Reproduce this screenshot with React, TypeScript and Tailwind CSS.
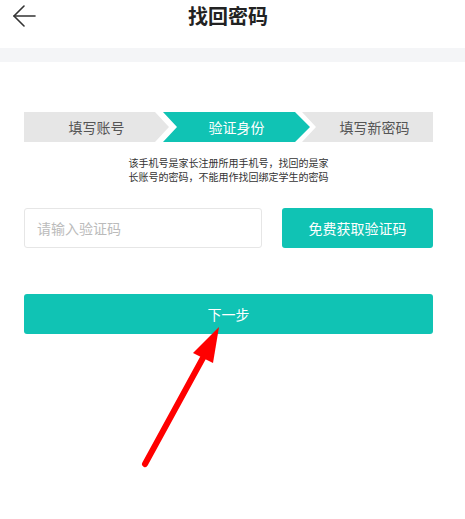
const teal = "bg-[#10c3b4]";

function BackIcon() {
  return (
    <svg width="24" height="22" viewBox="0 0 24 22" fill="none" stroke="#333" strokeWidth="1.6" strokeLinecap="round" strokeLinejoin="round">
      <path d="M2 11 H23" />
      <path d="M12 1 L2 11 L12 21" />
    </svg>
  );
}

function Steps() {
  return (
    <div className="flex h-[30px] text-[14px] leading-[30px]">
      <div className="w-[145px] shrink-0 bg-[#e6e6e6] text-[#555] text-center [clip-path:polygon(0_0,131px_0,145px_50%,131px_100%,0_100%)]">
        填写账号
      </div>
      <div className={`-ml-[6px] w-[147px] shrink-0 ${teal} text-white text-center [clip-path:polygon(0_0,132px_0,147px_50%,132px_100%,0_100%,14px_50%)]`}>
        验证身份
      </div>
      <div className="-ml-[8px] w-[131px] shrink-0 bg-[#e6e6e6] text-[#555] text-center pl-[14px] [clip-path:polygon(0_0,100%_0,100%_100%,0_100%,14px_50%)]">
        填写新密码
      </div>
    </div>
  );
}

export default function App() {
  return (
    <div className="relative w-[465px] h-[519px] bg-white overflow-hidden font-['Noto_Sans_CJK_SC','Noto_Sans',sans-serif]">
      {/* header */}
      <div className="relative h-[48px]">
        <div className="absolute left-[12px] top-[5px]">
          <BackIcon />
        </div>
        <div className="pt-[3px] pr-[9px] text-center text-[20px] leading-[26px] font-bold text-[#222]">找回密码</div>
      </div>
      <div className="h-[14px] bg-[#f4f5f7]" />

      <div className="ml-6 w-[409px] pt-[50px]">
        <Steps />

        <p className="mt-[14px] text-center text-[10px] leading-[14px] text-[#333]">
          该手机号是家长注册所用手机号，找回的是家
          <br />
          长账号的密码，不能用作找回绑定学生的密码
        </p>

        <div className="mt-[24px] flex items-center justify-between">
          <div className="w-[238px] h-[40px] border border-[#e6e6e6] rounded-[3px] flex items-center pl-[12px] text-[14px] text-[#bbb]">
            请输入验证码
          </div>
          <button className={`w-[151px] h-[40px] rounded-[3px] ${teal} text-white text-[14px]`}>
            免费获取验证码
          </button>
        </div>

        <button className={`mt-[46px] w-full h-[40px] rounded-[3px] ${teal} text-white text-[14px]`}>
          下一步
        </button>
      </div>

      {/* red annotation arrow */}
      <svg className="absolute left-0 top-0 pointer-events-none" width="465" height="519" viewBox="0 0 465 519">
        <path d="M145 464 L204 356" stroke="#ff0000" strokeWidth="6" strokeLinecap="round" />
        <polygon points="219,327 193,353 213,363" fill="#ff0000" />
      </svg>
    </div>
  );
}
